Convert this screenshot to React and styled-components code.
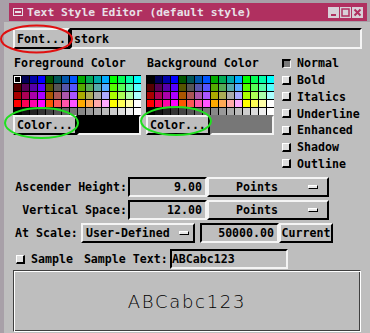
import React from 'react';
import styled, { createGlobalStyle } from 'styled-components';

const LIGHT = '#f4f4f4';
const DARK = '#000000';
const FACE = '#bebebe';
const TITLE = '#b03060';

const GlobalStyle = createGlobalStyle`
  html, body {
    margin: 0;
    padding: 0;
    background: #a8a0a8;
  }
  body {
    font-family: "DejaVu Sans Mono", "Liberation Mono", monospace;
  }
  * { box-sizing: border-box; }
`;

const raised = `
  border-style: solid;
  border-width: 2px;
  border-color: ${LIGHT} ${DARK} ${DARK} ${LIGHT};
`;

const sunken = `
  border-style: solid;
  border-width: 2px;
  border-color: ${DARK} ${LIGHT} ${LIGHT} ${DARK};
`;

const Window = styled.div`
  position: relative;
  width: 370px;
  height: 333px;
  overflow: hidden;
  display: flex;
  flex-direction: column;
  background: #a8a0a8;
`;

const TitleBar = styled.div`
  height: 18px;
  margin: 3px 3px 0 9px;
  padding: 0 4px 0 4px;
  display: flex;
  align-items: center;
  background: ${TITLE};
  color: #e8e0e8;
  font-size: 11.3px;
  font-weight: bold;
  white-space: pre;
`;

const TitleText = styled.span`
  flex: 1;
  margin-left: 4px;
`;

const TitleButtons = styled.div`
  display: flex;
  gap: 1px;
`;

const TitleButton = styled.span`
  width: 11px;
  height: 11px;
  display: flex;
  background: #d8d0d8;
`;

const Body = styled.div`
  flex: 1;
  margin: 1px 0 0 4px;
  padding: 6px 8px 0 9px;
  display: flex;
  flex-direction: column;
  background: ${FACE};
  color: #000;
  font-size: 11.6px;
  font-weight: bold;
  white-space: pre;
`;

const Row = styled.div`
  display: flex;
  align-items: center;
  height: ${(p) => p.$h || 20}px;
  margin-top: ${(p) => p.$mt || 0}px;
`;

const PushButton = styled.div`
  ${raised}
  width: ${(p) => p.$w}px;
  height: 100%;
  display: flex;
  align-items: center;
  justify-content: ${(p) => (p.$center ? 'center' : 'flex-start')};
  padding-left: ${(p) => (p.$center ? 0 : 2)}px;
  background: ${FACE};
  flex: none;
`;

const TextField = styled.div`
  ${sunken}
  height: 100%;
  width: ${(p) => (p.$w ? `${p.$w}px` : 'auto')};
  flex: ${(p) => (p.$w ? 'none' : 1)};
  display: flex;
  align-items: center;
  justify-content: ${(p) => (p.$right ? 'flex-end' : 'flex-start')};
  padding: 0 ${(p) => (p.$right ? 3 : 0)}px 0 ${(p) => p.$pl ?? 2}px;
  margin-left: ${(p) => p.$ml || 0}px;
  background: ${FACE};
`;

const ColorSection = styled.div`
  display: flex;
  align-items: flex-start;
  margin-top: 7px;
`;

const ColorPanel = styled.div`
  display: flex;
  flex-direction: column;
  width: 128px;
  margin-right: ${(p) => p.$mr || 0}px;
`;

const PanelLabel = styled.div`
  height: 14px;
  line-height: 14px;
  padding-left: 1px;
`;

const Palette = styled.div`
  margin-top: 5px;
  display: grid;
  grid-template-columns: repeat(16, 7px);
  grid-auto-rows: 7px;
  gap: 1px;
  padding: 1px 0 0 1px;
  height: 40px;
  background: #000;
`;

const Cell = styled.span`
  background: ${(p) => p.$c};
  box-shadow: ${(p) => (p.$selected ? 'inset 0 0 0 1px #ffffff' : 'none')};
`;

const ColorRow = styled.div`
  display: flex;
  height: 20px;
`;

const Swatch = styled.div`
  flex: 1;
  border-style: solid;
  border-width: 2px;
  border-color: ${(p) => p.$c} ${LIGHT} ${LIGHT} ${(p) => p.$c};
  background: ${(p) => p.$c};
`;

const ToggleList = styled.div`
  display: grid;
  grid-auto-rows: 16.75px;
  margin: -1px 0 0 8px;
`;

const Toggle = styled.div`
  display: flex;
  align-items: center;
  gap: 6px;
  margin-left: ${(p) => p.$ml || 0}px;
`;

const ToggleBox = styled.span`
  width: 9px;
  height: 9px;
  flex: none;
  border-style: solid;
  border-width: ${(p) => (p.$on ? '2px 1px 1px 2px' : '1px 2px 2px 1px')};
  border-color: ${(p) =>
    p.$on ? `${DARK} ${LIGHT} ${LIGHT} ${DARK}` : `#ffffff ${DARK} ${DARK} #ffffff`};
  background: ${(p) => (p.$on ? '#7a7a7a' : '#dedede')};
`;

const MeasureRows = styled.div`
  display: flex;
  flex-direction: column;
  gap: 3px;
  margin-top: 5px;
`;

const FieldLabel = styled.div`
  width: ${(p) => p.$w}px;
  text-align: ${(p) => (p.$right ? 'right' : 'left')};
  padding: ${(p) => (p.$right ? '0 1px 0 0' : `0 0 0 ${p.$pl ?? 2}px`)};
  flex: none;
`;

const OptionMenu = styled.div`
  ${raised}
  width: ${(p) => p.$w}px;
  height: 100%;
  flex: none;
  display: flex;
  align-items: center;
  padding: 0 ${(p) => p.$pr}px 0 ${(p) => p.$pl}px;
  background: ${FACE};
`;

const OptionLabel = styled.span`
  flex: ${(p) => (p.$center ? 1 : 'none')};
  text-align: center;
  padding-right: ${(p) => (p.$center ? 5 : 0)}px;
`;

const Indicator = styled.span`
  width: 10px;
  height: 4px;
  flex: none;
  margin-left: ${(p) => p.$ml || 0}px;
  border-style: solid;
  border-width: 1px;
  border-color: #ffffff ${DARK} ${DARK} #ffffff;
  background: #e8e8e8;
`;

const Preview = styled.div`
  margin-top: 1px;
  width: 348px;
  height: 62px;
  flex: none;
  display: flex;
  align-items: center;
  justify-content: center;
  border: 1px solid;
  border-color: #404040 #ffffff #ffffff #404040;
  box-shadow: inset 1px 1px 0 #ffffff, inset -1px -1px 0 #404040;
  color: #000;
  font-family: "DejaVu Sans", "Liberation Sans", sans-serif;
  font-weight: 200;
  font-size: 18px;
  letter-spacing: 1.7px;
`;

const Annotations = styled.svg`
  position: absolute;
  left: 0;
  top: 0;
  pointer-events: none;
`;

const levels = [0x00, 0x55, 0xaa, 0xff];
const hex = (n) => n.toString(16).padStart(2, '0');

const paletteColors = (() => {
  const out = [];
  levels.forEach((r) => {
    levels.forEach((g) => {
      levels.forEach((b) => out.push(`#${hex(r)}${hex(g)}${hex(b)}`));
    });
  });
  for (let i = 0; i < 16; i++) {
    const v = hex(i * 17);
    out.push(`#${v}${v}${v}`);
  }
  return out;
})();

const ColorChooser = ({ label, swatch, selected, mr }) => (
  <ColorPanel $mr={mr}>
    <PanelLabel>{label}</PanelLabel>
    <Palette>
      {paletteColors.map((c, i) => (
        <Cell key={i} $c={c} $selected={i === selected} />
      ))}
    </Palette>
    <ColorRow>
      <PushButton $w={64}>Color...</PushButton>
      <Swatch $c={swatch} />
    </ColorRow>
  </ColorPanel>
);

const styles = ['Normal', 'Bold', 'Italics', 'Underline', 'Enhanced', 'Shadow', 'Outline'];

export default function App() {
  return (
    <Window>
      <GlobalStyle />
      <TitleBar>
        <svg width="10" height="8" viewBox="0 0 10 8">
          <rect x="0.5" y="0.5" width="9" height="7" fill="none" stroke="#e8e0e8" />
          <rect x="2" y="3" width="6" height="2" fill="#e8e0e8" />
        </svg>
        <TitleText>Text Style Editor (default style)</TitleText>
        <TitleButtons>
          <TitleButton>
            <svg width="11" height="11" viewBox="0 0 11 11">
              <rect x="3" y="7" width="5" height="2" fill={TITLE} />
            </svg>
          </TitleButton>
          <TitleButton>
            <svg width="11" height="11" viewBox="0 0 11 11">
              <rect x="2" y="2" width="7" height="7" fill="none" stroke={TITLE} strokeWidth="1.5" />
            </svg>
          </TitleButton>
          <TitleButton>
            <svg width="11" height="11" viewBox="0 0 11 11">
              <path d="M2.5 2.5 L8.5 8.5 M8.5 2.5 L2.5 8.5" stroke={TITLE} strokeWidth="2" />
            </svg>
          </TitleButton>
        </TitleButtons>
      </TitleBar>

      <Body>
        <Row $h={21}>
          <PushButton $w={57}>Font...</PushButton>
          <TextField>stork</TextField>
        </Row>

        <ColorSection>
          <ColorChooser label="Foreground Color" swatch="#000000" selected={0} mr={5} />
          <ColorChooser label="Background Color" swatch="#777777" selected={-1} />
          <ToggleList>
            {styles.map((s, i) => (
              <Toggle key={s}>
                <ToggleBox $on={i === 0} />
                {s}
              </Toggle>
            ))}
          </ToggleList>
        </ColorSection>

        <MeasureRows>
          <Row>
            <FieldLabel $w={115} $right>Ascender Height:</FieldLabel>
            <TextField $w={79} $right>9.00</TextField>
            <OptionMenu $w={122} $pl={2} $pr={9}>
              <OptionLabel $center>Points</OptionLabel>
              <Indicator />
            </OptionMenu>
          </Row>
          <Row>
            <FieldLabel $w={115} $right>Vertical Space:</FieldLabel>
            <TextField $w={79} $right>12.00</TextField>
            <OptionMenu $w={122} $pl={2} $pr={9}>
              <OptionLabel $center>Points</OptionLabel>
              <Indicator />
            </OptionMenu>
          </Row>
          <Row>
            <FieldLabel $w={68}>At Scale:</FieldLabel>
            <OptionMenu $w={114} $pl={3} $pr={6}>
              <OptionLabel>User-Defined</OptionLabel>
              <Indicator $ml={9} />
            </OptionMenu>
            <TextField $w={79} $right $ml={5}>50000.00</TextField>
            <PushButton $w={54} $center>Current</PushButton>
          </Row>
        </MeasureRows>

        <Row $mt={6}>
          <Toggle $ml={3}>
            <ToggleBox />
            Sample
          </Toggle>
          <FieldLabel $w={97} $pl={11}>Sample Text:</FieldLabel>
          <TextField $w={118} $pl={0}>ABCabc123</TextField>
        </Row>

        <Preview>ABCabc123</Preview>
      </Body>

      <Annotations width="370" height="333" viewBox="0 0 370 333">
        <ellipse cx="36.5" cy="39" rx="35.5" ry="13.5" fill="none" stroke="#e01010" strokeWidth="2" />
        <ellipse cx="41.5" cy="123" rx="36.5" ry="15" fill="none" stroke="#20e020" strokeWidth="2" />
        <ellipse cx="176" cy="121" rx="35" ry="14" fill="none" stroke="#20e020" strokeWidth="2" />
      </Annotations>
    </Window>
  );
}
